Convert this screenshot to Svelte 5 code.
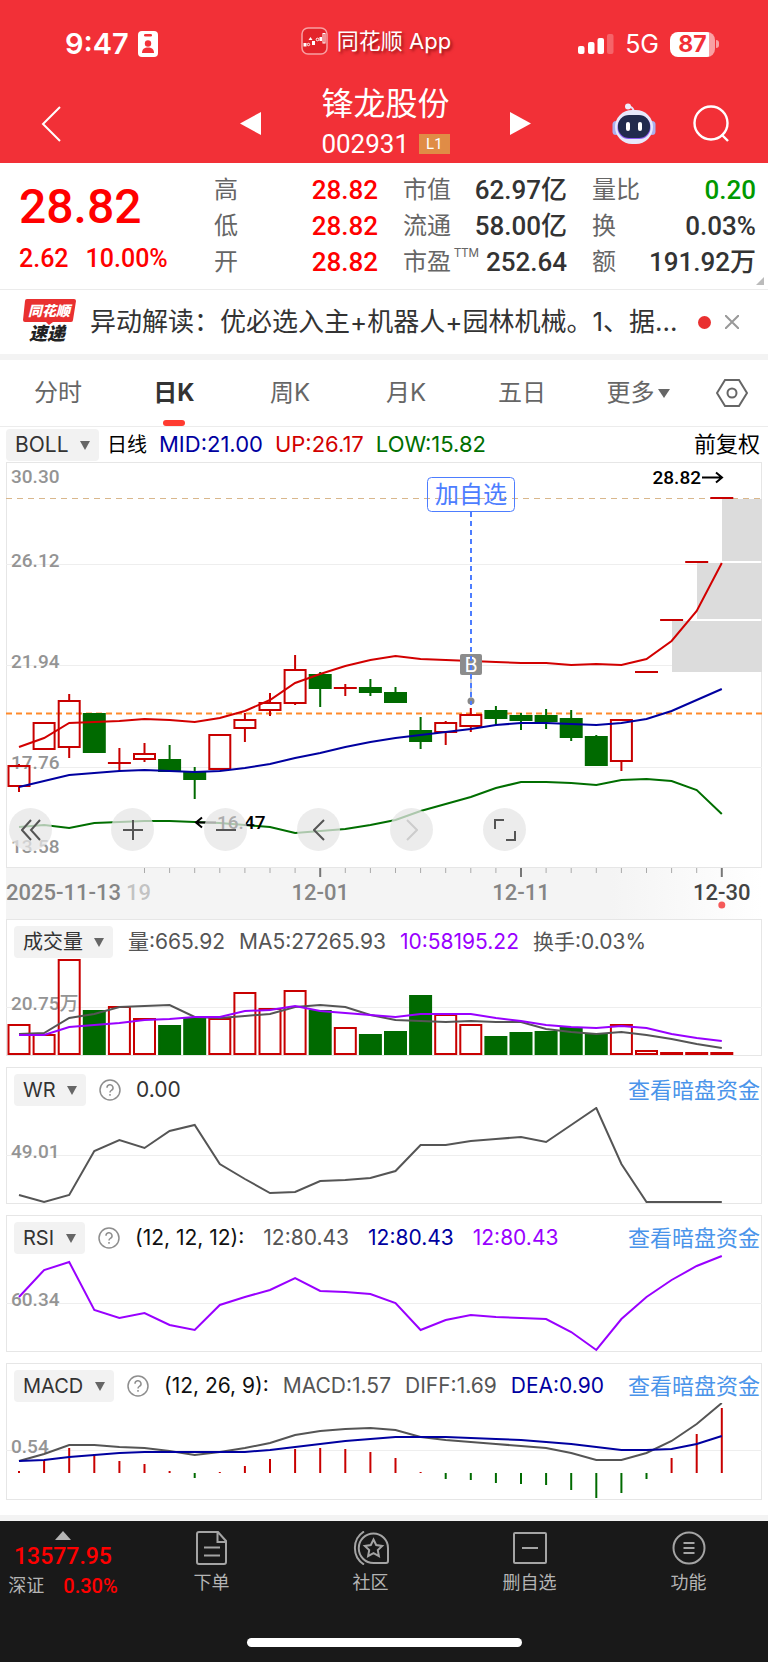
<script lang="ts">
	type Candle = [kind: 'up' | 'down', top: number, bottom: number, high: number, low: number];
	type Value = { text: string; tone: string };

	const STEP = 25.1;
	const FIRST = 13;
	const BAR = 23;

	const x = (i: number) => FIRST + i * STEP;
	const line = (ys: number[]) => ys.map((y, i) => `${x(i).toFixed(1)},${y}`).join(' ');

	const quotes = [
		[
			{ label: '高', value: '28.82', tone: 'rise' },
			{ label: '低', value: '28.82', tone: 'rise' },
			{ label: '开', value: '28.82', tone: 'rise' }
		],
		[
			{ label: '市值', value: '62.97亿', tone: '' },
			{ label: '流通', value: '58.00亿', tone: '' },
			{ label: '市盈', sup: 'TTM', value: '252.64', tone: '' }
		],
		[
			{ label: '量比', value: '0.20', tone: 'fall' },
			{ label: '换', value: '0.03%', tone: '' },
			{ label: '额', value: '191.92万', tone: '' }
		]
	];

	const tabs = ['分时', '日K', '周K', '月K', '五日'];
	let activeTab = $state('日K');

	// Candles, in chart units from the top of the price pane
	const candles: Candle[] = [
		['up', 304, 324, 302, 330],
		['up', 261, 287, 261, 287],
		['up', 239, 285, 232, 296],
		['down', 252, 290, 251, 290],
		['up', 301, 301, 286, 309],
		['up', 292, 297, 281, 300],
		['down', 298, 309, 283, 309],
		['down', 310, 317, 305, 337],
		['up', 273, 307, 273, 307],
		['up', 258, 266, 251, 280],
		['up', 241, 248, 231, 254],
		['up', 208, 241, 193, 243],
		['down', 213, 226, 210, 245],
		['up', 226, 226, 222, 234],
		['down', 226, 230, 217, 234],
		['down', 231, 240, 225, 241],
		['down', 269, 279, 255, 287],
		['up', 261, 270, 259, 283],
		['up', 253, 264, 246, 270],
		['down', 249, 256, 244, 263],
		['down', 254, 258, 251, 268],
		['down', 254, 259, 247, 267],
		['down', 257, 275, 248, 279],
		['down', 275, 303, 273, 304],
		['up', 258, 299, 258, 309],
		['up', 210, 210, 210, 210],
		['up', 158, 158, 158, 158],
		['up', 100, 100, 100, 100],
		['up', 36, 36, 36, 36]
	];

	const upper = [285, 276, 261, 260, 259, 257, 258, 260, 256, 249, 238, 221, 212, 204, 198, 194, 197, 198, 199, 200, 201, 201, 203, 202, 203, 197, 179, 149, 101];
	const middle = [325, 319, 313, 311, 309, 308, 309, 310, 309, 306, 302, 296, 291, 285, 280, 276, 273, 270, 267, 263, 261, 261, 262, 263, 261, 257, 249, 238, 227];
	const lower = [365, 363, 366, 361, 360, 359, 359, 360, 361, 363, 365, 371, 369, 367, 363, 358, 349, 342, 335, 326, 320, 320, 321, 323, 318, 317, 319, 328, 352];

	const priceLabels = [
		{ text: '30.30', y: 21 },
		{ text: '26.12', y: 105 },
		{ text: '21.94', y: 206 },
		{ text: '17.76', y: 307 },
		{ text: '13.58', y: 391 }
	];

	// Price gaps left open by the limit-up days
	const gaps = [
		{ x: 716, y: 37, h: 62 },
		{ x: 691, y: 101, h: 56 },
		{ x: 666, y: 159, h: 51 }
	];

	const ticks = Array.from({ length: 24 }, (_, i) => i + 5);
	const majorTicks = [12, 20, 28];

	const volumeTops = [106, 116, 41, 92, 88, 100, 107, 99, 100, 74, 90, 72, 92, 109, 116, 113, 77, 96, 106, 118, 114, 113, 109, 115, 106, 132, 134, 134, 134];
	const volumeFalls = [3, 6, 7, 12, 14, 15, 16, 19, 20, 21, 22, 23];
	const volumeMa5 = [115, 114, 99, 95, 88, 87, 86, 98, 99, 97, 95, 88, 86, 88, 96, 101, 102, 103, 102, 103, 103, 110, 113, 115, 113, 116, 120, 125, 129];
	const volumeMa10 = [116, 116, 108, 106, 104, 101, 100, 98, 98, 92, 91, 87, 92, 94, 96, 98, 95, 95, 95, 99, 102, 106, 108, 109, 107, 109, 115, 119, 122];

	const wr = [128, 135, 128, 84, 73, 81, 64, 58, 97, 112, 126, 125, 114, 113, 111, 104, 78, 78, 74, 72, 70, 75, 58, 41, 97, 135, 135, 135, 135];
	const rsi = [82, 55, 47, 95, 103, 98, 110, 115, 90, 82, 75, 63, 76, 77, 79, 88, 115, 105, 100, 102, 103, 104, 117, 135, 104, 82, 65, 51, 41];

	const macdZero = 110;
	const macdBars = [108, 97, 85, 91, 98, 101, 108, 115, 109, 103, 96, 86, 85, 86, 89, 95, 109, 116, 117, 120, 121, 122, 127, 135, 130, 116, 95, 71, 45];
	const diff = [98, 91, 82, 82, 84, 85, 88, 92, 89, 85, 80, 72, 68, 66, 65, 67, 74, 77, 79, 81, 83, 85, 90, 97, 97, 90, 78, 61, 40];
	const dea = [98, 97, 94, 92, 90, 89, 89, 89, 89, 89, 87, 84, 81, 78, 76, 74, 74, 74, 75, 76, 77, 79, 81, 84, 87, 87, 86, 81, 73];

	const volumeValues: Value[] = [
		{ text: '量:665.92', tone: 'gray' },
		{ text: 'MA5:27265.93', tone: 'gray' },
		{ text: '10:58195.22', tone: 'purple' },
		{ text: '换手:0.03%', tone: 'gray' }
	];
	const wrValues: Value[] = [{ text: '0.00', tone: 'dark' }];
	const rsiValues: Value[] = [
		{ text: '(12, 12, 12):', tone: 'black' },
		{ text: '12:80.43', tone: 'gray' },
		{ text: '12:80.43', tone: 'blue' },
		{ text: '12:80.43', tone: 'purple' }
	];
	const macdValues: Value[] = [
		{ text: '(12, 26, 9):', tone: 'black' },
		{ text: 'MACD:1.57', tone: 'gray' },
		{ text: 'DIFF:1.69', tone: 'gray' },
		{ text: 'DEA:0.90', tone: 'blue' }
	];
</script>

{#snippet picker(name: string, label: string)}
	<span class="picker">
		<select aria-label={label}>
			<option>{name}</option>
		</select>
		<svg width="10" height="9" viewBox="0 0 10 9"><path d="M0 0h10L5 9z" fill="#666" /></svg>
	</span>
{/snippet}

{#snippet head(name: string, values: Value[], help: boolean, wide: boolean)}
	<div class="pane-head">
		{@render picker(name, '指标')}
		{#if help}
			<button class="help" aria-label="指标说明">
				<svg width="22" height="22" viewBox="0 0 22 22" fill="none" stroke="#8e8e8e" stroke-width="1.5">
					<circle cx="11" cy="11" r="10" />
					<path d="M8 8.8a3 3 0 1 1 4.4 2.6c-1 .5-1.4 1-1.4 2.1" />
					<path d="M11 15v1.8" />
				</svg>
			</button>
		{/if}
		<div class="values" class:wide>
			{#each values as v}
				<span class={v.tone}>{v.text}</span>
			{/each}
		</div>
		{#if help}
			<a class="dark-pool" href="#funds">查看暗盘资金</a>
		{/if}
	</div>
{/snippet}

<header class="top">
	<div class="status">
		<div class="clock">
			9:47
			<svg width="20" height="26" viewBox="0 0 20 26">
				<rect width="20" height="26" rx="4" fill="#fff" />
				<rect x="6" y="3" width="8" height="2.4" rx="1.2" fill="#f23037" />
				<circle cx="10" cy="12.5" r="3.2" fill="#f23037" />
				<path d="M4 22c0-4 2.4-5.6 6-5.6s6 1.6 6 5.6z" fill="#f23037" />
			</svg>
		</div>
		<div class="app-name">
			<svg width="27" height="28" viewBox="0 0 27 28">
				<rect x="1" y="1" width="25" height="26" rx="6" fill="#e3242b" stroke="#f8a0a3" stroke-width="1.5" />
				<g fill="#fff">
					<rect x="2.5" y="16" width="3" height="3.5" />
					<path d="M9.5 10l2 3h-4z" />
					<rect x="11" y="14" width="3" height="4" />
					<rect x="18.5" y="10" width="2.5" height="4" />
				</g>
				<g fill="none" stroke="#fff">
					<circle cx="7.5" cy="17.5" r="1.2" />
					<circle cx="16.5" cy="12.5" r="1.3" />
					<rect x="22" y="6.5" width="2" height="9.5" />
				</g>
			</svg>
			<span>同花顺 App</span>
		</div>
		<div class="signal">
			<svg width="36" height="20" viewBox="0 0 36 20" fill="#fff">
				<rect y="12" width="6.5" height="8" rx="2" />
				<rect x="10" y="8" width="6.5" height="12" rx="2" />
				<rect x="19.5" y="4" width="6.5" height="16" rx="2" />
				<rect x="29" width="6.5" height="20" rx="2" opacity=".25" />
			</svg>
			<span>5G</span>
			<span class="battery">87</span>
		</div>
	</div>
	<nav class="nav">
		<button class="back" aria-label="返回">
			<svg width="20" height="36" viewBox="0 0 20 36" fill="none" stroke="#fff" stroke-width="2"><path d="M19 1L2 18l17 17" /></svg>
		</button>
		<div class="stock">
			<button aria-label="上一只"><svg width="21" height="23" viewBox="0 0 21 23"><path d="M21 0v23L0 11.5z" fill="#fff" /></svg></button>
			<div class="stock-name">
				<h1>锋龙股份</h1>
				<p>002931 <span class="level">L1</span></p>
			</div>
			<button aria-label="下一只"><svg width="21" height="23" viewBox="0 0 21 23"><path d="M0 0v23l21-11.5z" fill="#fff" /></svg></button>
		</div>
		<div class="tools">
			<button aria-label="智能助手">
				<svg width="44" height="42" viewBox="0 0 44 42">
					<path d="M15 4c4-1 7 1 7 6" fill="none" stroke="#e4e4fb" stroke-width="2" />
					<circle cx="16" cy="3.5" r="3" fill="#eeeefc" />
					<rect x="0.5" y="18" width="7" height="14" rx="3.5" fill="#aab0ee" />
					<rect x="36.5" y="18" width="7" height="14" rx="3.5" fill="#aab0ee" />
					<rect x="3" y="7" width="38" height="34" rx="17" fill="#e8e9fb" />
					<rect x="5.5" y="13" width="33" height="23" rx="11" fill="#8b5cf0" />
					<rect x="6" y="12" width="32" height="23" rx="11" fill="#222b4d" />
					<rect x="14" y="19" width="4" height="9" rx="2" fill="#fff" />
					<rect x="26" y="19" width="4" height="9" rx="2" fill="#fff" />
				</svg>
			</button>
			<button aria-label="搜索">
				<svg width="37" height="37" viewBox="0 0 37 37" fill="none" stroke="#fff" stroke-width="2.4"><circle cx="18" cy="18" r="16.5" /><path d="M28.5 29.5L35 36" /></svg>
			</button>
		</div>
	</nav>
</header>

<main>
	<section class="quote">
		<div class="last">
			<strong>28.82</strong>
			<div class="change"><span>2.62</span><span>10.00%</span></div>
		</div>
		{#each quotes as column}
			<dl>
				{#each column as q}
					<div>
						<dt>{q.label}{#if q.sup}<sup>{q.sup}</sup>{/if}</dt>
						<dd class={q.tone}>{q.value}</dd>
					</div>
				{/each}
			</dl>
		{/each}
		<svg class="corner" width="8" height="8" viewBox="0 0 8 8"><path d="M8 0v8H0z" fill="#bbb" /></svg>
	</section>

	<section class="news">
		<svg class="express" width="54" height="52" viewBox="0 -3 54 52">
			<path d="M4 0h47q2 0 2 2l-3 19q0 2-2 2H30l-4 3-3-3H2q-2 0-2-2L2 2q0-2 2-2z" fill="#e93030" />
			<text x="26" y="17" fill="#fff" font-size="14">同花顺</text>
			<text x="24" y="41" fill="#222" font-size="18">速递</text>
		</svg>
		<a href="#news">异动解读：优必选入主+机器人+园林机械。1、据...</a>
		<span class="dot"></span>
		<button aria-label="关闭">
			<svg width="14" height="14" viewBox="0 0 14 14" stroke="#999" stroke-width="2"><path d="M0 0l14 14M14 0L0 14" /></svg>
		</button>
	</section>

	<div class="tabs">
		{#each tabs as tab}
			<button class="tab" class:active={activeTab === tab} onclick={() => (activeTab = tab)}>{tab}</button>
		{/each}
		<button class="tab" aria-haspopup="true">
			更多<svg width="12" height="9" viewBox="0 0 12 9"><path d="M0 0h12L6 9z" fill="#666" /></svg>
		</button>
		<button class="settings" aria-label="设置">
			<svg width="32" height="28" viewBox="0 0 32 28" fill="none" stroke="#666" stroke-width="2"><path d="M9 1h14l8 13-8 13H9L1 14z" /><circle cx="16" cy="14" r="4.5" /></svg>
		</button>
	</div>

	<div class="boll">
		{@render picker('BOLL', '主图指标')}
		<span class="period">日线</span>
		<span class="blue">MID:21.00</span>
		<span class="red">UP:26.17</span>
		<span class="green">LOW:15.82</span>
		<span class="adjust">前复权</span>
	</div>

	<section class="pane price">
		<svg class="chart" viewBox="0 0 756 406">
			{#each [102.5, 203.5, 305.5] as y}
				<path class="grid" d="M0 {y}H756" />
			{/each}
			{#each gaps as g}
				<rect x={g.x} y={g.y} width={756 - g.x} height={g.h} fill="#dcdcdc" />
			{/each}
			{#each priceLabels as p}
				<text class="axis" x="5" y={p.y}>{p.text}</text>
			{/each}
			<path d="M0 36.5H756" stroke="#d9b78c" stroke-dasharray="6 5" />
			<path d="M0 251.5H756" stroke="#ff8a2b" stroke-width="2" stroke-dasharray="6 4" />
			{#each candles as [kind, top, bottom, high, low], i}
				<g class={kind}>
					<path d="M{x(i)} {high}V{top}M{x(i)} {bottom}V{low}" />
					<rect x={x(i) - BAR / 2 + 1} y={top} width={BAR - 2} height={bottom - top} />
					{#if top === bottom}
						<path d="M{x(i) - BAR / 2} {top}h{BAR}" />
					{/if}
				</g>
			{/each}
			<polyline class="curve up-line" points={line(upper)} />
			<polyline class="curve mid-line" points={line(middle)} />
			<polyline class="curve low-line" points={line(lower)} />

			<rect x="421.5" y="15.5" width="87" height="34" rx="4" fill="none" stroke="#4d7dff" />
			<text class="note" x="465" y="41">加自选</text>
			<rect x="454" y="192" width="22" height="21" rx="2" fill="#8c8c8c" />
			<text class="mark" x="465" y="210">B</text>
			<circle cx="465" cy="239" r="3.5" fill="#888" />
			<path d="M465 213v24" stroke="#999" />
			<path d="M465 50V243" stroke="#4d7dff" stroke-width="2" stroke-dasharray="5 4" />

			<text class="peak" x="695" y="22" text-anchor="end">28.82</text>
			<path d="M696 15.5h20m-6-5l6 5-6 5" class="arrow" />
			<text class="peak" x="211" y="367">16.47</text>
			<path d="M210 360.5h-20m6-5l-6 5 6 5" class="arrow" />
		</svg>
		<div class="controls">
			<button aria-label="最早"><svg width="20" height="22" viewBox="0 0 20 22"><path d="M10 1L1 11l9 10M19 1l-9 10 9 10" /></svg></button>
			<button aria-label="放大"><svg width="20" height="20" viewBox="0 0 20 20"><path d="M10 0v20M0 10h20" /></svg></button>
			<button aria-label="缩小"><svg width="20" height="20" viewBox="0 0 20 20"><path d="M0 10h20" /></svg></button>
			<button aria-label="左移"><svg width="12" height="22" viewBox="0 0 12 22"><path d="M11 1L1 11l10 10" /></svg></button>
			<button aria-label="右移" disabled><svg width="12" height="22" viewBox="0 0 12 22"><path d="M1 1l10 10L1 21" /></svg></button>
			<button aria-label="全屏"><svg width="22" height="22" viewBox="0 0 22 22"><path d="M1 10V1h9M21 12v9h-9" /></svg></button>
		</div>
	</section>

	<section class="dates">
		<svg class="chart" viewBox="0 0 756 51">
			{#each ticks as i}
				{@const major = majorTicks.includes(i)}
				<path d="M{x(i)} 0v{major ? 9 : 5}" stroke={major ? '#777' : '#aaa'} stroke-width={major ? 2 : 1} />
			{/each}
			<text x="0" y="32">2025-11-13</text>
			<text x="120" y="32" fill-opacity=".45">19</text>
			<text x={x(12)} y="32" text-anchor="middle">12-01</text>
			<text x={x(20)} y="32" text-anchor="middle">12-11</text>
			<text x={x(28)} y="32" text-anchor="middle" class="today">12-30</text>
			<circle cx={x(28)} cy="37" r="3.5" fill="#f55a5a" />
		</svg>
	</section>

	<section class="pane">
		{@render head('成交量', volumeValues, false, false)}
		<svg class="chart" viewBox="0 40 756 97">
			<path class="grid" d="M0 88.5H756" />
			<text class="axis" x="5" y="91">20.75万</text>
			{#each volumeTops as top, i}
				<g class={volumeFalls.includes(i) ? 'down' : 'up'}>
					<rect x={x(i) - BAR / 2 + 1} y={top} width={BAR - 2} height={135 - top} />
				</g>
			{/each}
			<polyline class="curve gray-line" points={line(volumeMa5)} />
			<polyline class="curve purple-line" points={line(volumeMa10)} />
		</svg>
	</section>

	<section class="pane">
		{@render head('WR', wrValues, true, false)}
		<svg class="chart" viewBox="0 40 756 97">
			<path class="grid" d="M0 88.5H756" />
			<text class="axis" x="5" y="91">49.01</text>
			<polyline class="curve gray-line" points={line(wr)} />
		</svg>
	</section>

	<section class="pane">
		{@render head('RSI', rsiValues, true, true)}
		<svg class="chart" viewBox="0 40 756 97">
			<path class="grid" d="M0 88.5H756" />
			<text class="axis" x="5" y="91">60.34</text>
			<polyline class="curve purple-line" points={line(rsi)} />
		</svg>
	</section>

	<section class="pane">
		{@render head('MACD', macdValues, true, false)}
		<svg class="chart" viewBox="0 40 756 97">
			<path class="grid" d="M0 87.5H756" />
			<text class="axis" x="5" y="90">0.54</text>
			{#each macdBars as y, i}
				<path d="M{x(i)} {macdZero}V{y}" stroke={y < macdZero ? '#c80000' : '#006a00'} stroke-width="2" />
			{/each}
			<polyline class="curve gray-line" points={line(diff)} />
			<polyline class="curve mid-line" points={line(dea)} />
		</svg>
	</section>
</main>

<footer>
	<div class="bar">
		<button class="index">
			<svg width="16" height="9" viewBox="0 0 16 9"><path d="M8 0l8 9H0z" fill="#b4b4b4" /></svg>
			<strong>13577.95</strong>
			<span class="index-row"><span>深证</span><b>0.30%</b></span>
		</button>
		<button class="action">
			<svg width="32" height="34" viewBox="0 0 32 34"><path d="M3 1h19l8 9v21q0 2-2 2H3q-2 0-2-2V3q0-2 2-2zM21.5 1.5V11H30M8 16.5h16M8 24.5h16" /></svg>
			下单
		</button>
		<button class="action">
			<svg width="36" height="34" viewBox="0 0 36 34">
				<path d="M20.5 2.5A14.5 14.5 0 1 0 20.5 32H33q2 0 2-2V17A14.5 14.5 0 0 0 20.5 2.5zM11 .5a19.5 19.5 0 0 0 0 33" />
				<path d="M20.5 8.5l2.7 5.5 6 .9-4.4 4.2 1.1 6-5.4-2.9-5.4 2.9 1.1-6-4.4-4.2 6-.9z" />
			</svg>
			社区
		</button>
		<button class="action">
			<svg width="34" height="34" viewBox="0 0 34 34"><rect x="1" y="2" width="32" height="30" rx="1" /><path d="M9 17h16" /></svg>
			删自选
		</button>
		<button class="action">
			<svg width="34" height="34" viewBox="0 0 34 34"><circle cx="17" cy="17" r="15.5" /><path d="M11.5 12h11M11.5 17h11M11.5 22h11" /></svg>
			功能
		</button>
	</div>
	<div class="home"></div>
</footer>

<style>
	:global(body) {
		margin: 0;
		background: #fff;
		font-family: Inter, 'Noto Sans CJK SC', sans-serif;
		line-height: 1.2;
	}
	button {
		display: flex;
		align-items: center;
		justify-content: center;
		padding: 0;
		border: 0;
		background: none;
		color: inherit;
		font: inherit;
		cursor: pointer;
	}
	svg {
		display: block;
		flex: none;
	}
	a {
		text-decoration: none;
	}

	.top {
		background: #f23037;
		color: #fff;
	}
	.status {
		display: grid;
		grid-template-columns: 1fr auto 1fr;
		align-items: center;
		height: 64px;
		padding: 12px 53px 0 37px;
	}
	.clock {
		display: flex;
		align-items: center;
		gap: 9px;
		padding-left: 28px;
		font-size: 29px;
		font-weight: 600;
		line-height: 64px;
	}
	.app-name {
		display: flex;
		align-items: center;
		gap: 9px;
		font-size: 22px;
		line-height: 56px;
		padding-bottom: 6px;
		text-shadow: 2px 2px 3px rgba(90, 0, 0, 0.6);
	}
	.signal {
		display: flex;
		align-items: center;
		justify-content: flex-end;
		gap: 11px;
		font-size: 25px;
	}
	.battery {
		position: relative;
		width: 45px;
		border-radius: 8px;
		background: linear-gradient(90deg, #fff 86%, #f9a0a3 86%);
		color: #f23037;
		font-size: 23px;
		font-weight: 700;
		line-height: 25px;
		text-align: center;
	}
	.battery::after {
		content: '';
		position: absolute;
		top: 8px;
		right: -4px;
		width: 3px;
		height: 8px;
		border-radius: 0 3px 3px 0;
		background: #f9a0a3;
	}
	.nav {
		display: grid;
		grid-template-columns: 1fr auto 1fr;
		align-items: center;
		height: 87px;
		padding: 0 38px 0 41px;
	}
	.back {
		justify-self: start;
		padding-top: 8px;
	}
	.stock {
		display: flex;
		align-items: center;
		justify-content: space-between;
		width: 292px;
	}
	.stock > button {
		padding-top: 8px;
	}
	.stock-name {
		padding-top: 7px;
	}
	.stock-name h1 {
		margin: 0;
		font-size: 32px;
		font-weight: 400;
		line-height: 42px;
	}
	.stock-name p {
		display: flex;
		align-items: center;
		justify-content: center;
		gap: 10px;
		margin: 0;
		font-family: Roboto, sans-serif;
		font-size: 26px;
		line-height: 38px;
	}
	.level {
		padding: 0 7px;
		background: #e08c46;
		font-size: 15px;
		line-height: 20px;
	}
	.tools {
		display: flex;
		justify-content: flex-end;
		gap: 37px;
		padding-top: 8px;
	}

	.quote {
		position: relative;
		display: grid;
		grid-template-columns: 170fr 164fr 164fr 164fr;
		gap: 25px;
		padding: 9px 12px 9px 19px;
		border-bottom: 1px solid #ebebeb;
		color: #333;
		font-family: Roboto, 'Noto Sans CJK SC', sans-serif;
	}
	.last {
		color: #f00;
		font-weight: 500;
	}
	.last strong {
		display: block;
		font-size: 48px;
		font-weight: 500;
		line-height: 70px;
	}
	.change {
		display: flex;
		gap: 17px;
		font-size: 25px;
		line-height: 34px;
	}
	dl {
		margin: 0;
	}
	dl div {
		display: flex;
		justify-content: space-between;
		height: 36px;
		line-height: 36px;
		white-space: nowrap;
	}
	dt {
		display: flex;
		color: #666;
		font-size: 24px;
	}
	sup {
		margin-left: 3px;
		font-size: 12px;
		line-height: 18px;
	}
	dd {
		margin: 0;
		font-size: 26px;
		font-weight: 500;
	}
	.rise {
		color: #f00;
	}
	.fall {
		color: #090;
	}
	.corner {
		position: absolute;
		right: 4px;
		bottom: 4px;
	}

	.news {
		display: flex;
		align-items: center;
		height: 64px;
		padding: 0 29px 0 23px;
		border-bottom: 6px solid #f3f3f3;
	}
	.express {
		overflow: visible;
	}
	.express text {
		font-family: 'Noto Sans CJK SC', sans-serif;
		font-style: italic;
		font-weight: 900;
		text-anchor: middle;
	}
	.news a {
		flex: 1;
		min-width: 0;
		margin-left: 13px;
		overflow: hidden;
		color: #333;
		font-size: 26px;
		line-height: 40px;
		text-overflow: ellipsis;
		white-space: nowrap;
	}
	.dot {
		width: 13px;
		height: 13px;
		margin: 0 14px 0 12px;
		border-radius: 50%;
		background: #e93030;
	}

	.tabs {
		display: flex;
		height: 66px;
		border-bottom: 1px solid #ececec;
	}
	.tab {
		position: relative;
		flex: 1;
		gap: 3px;
		color: #666;
		font-size: 24px;
	}
	.tab.active {
		color: #333;
		font-weight: 700;
	}
	.tab.active::after {
		content: '';
		position: absolute;
		bottom: 0;
		left: 50%;
		width: 22px;
		height: 6px;
		margin-left: -11px;
		border-radius: 3px;
		background: #ff3b30;
	}
	.settings {
		width: 72px;
	}

	.picker {
		position: relative;
		display: flex;
	}
	.picker select {
		height: 32px;
		margin: 0;
		padding: 0 30px 0 9px;
		border: 0;
		border-radius: 4px;
		background: #f2f2f2;
		appearance: none;
		color: #333;
		font: inherit;
		font-size: 20px;
	}
	.picker svg {
		position: absolute;
		top: 12px;
		right: 9px;
		pointer-events: none;
	}
	.boll {
		display: flex;
		align-items: center;
		gap: 12px;
		height: 35px;
		padding: 0 8px 0 6px;
		font-size: 22px;
		white-space: nowrap;
	}
	.boll .picker {
		margin-right: -4px;
	}
	.boll .picker select {
		font-size: 21px;
	}
	.period {
		font-size: 20px;
	}
	.adjust {
		margin-left: auto;
	}
	.black {
		color: #111;
	}
	.dark {
		color: #333;
	}
	.gray {
		color: #555;
	}
	.blue {
		color: #0000a0;
	}
	.red {
		color: #d20000;
	}
	.green {
		color: #006e00;
	}
	.purple {
		color: #90f;
	}

	.pane {
		position: relative;
		margin: 0 6px 11px;
		box-shadow: inset 0 0 0 1px #e6e6e6;
	}
	.price {
		margin-bottom: 0;
	}
	.pane-head {
		display: flex;
		align-items: center;
		height: 32px;
		padding: 7px 2px 1px 8px;
		font-size: 21px;
		white-space: nowrap;
	}
	.help {
		margin-left: 13px;
	}
	.values {
		display: flex;
		gap: 14px;
		margin-left: 15px;
	}
	.values.wide {
		gap: 19px;
	}
	.dark-pool {
		margin-left: auto;
		color: #4a94ea;
		font-size: 22px;
	}

	.chart {
		width: 100%;
		height: auto;
	}
	.grid {
		stroke: #eee;
	}
	.axis {
		fill: #949494;
		font: 500 19px Roboto, 'Noto Sans CJK SC', sans-serif;
	}
	.up path,
	.up rect {
		fill: none;
		stroke: #c80000;
		stroke-width: 2;
	}
	.down path,
	.down rect {
		fill: #006a00;
		stroke: #006a00;
		stroke-width: 2;
	}
	.curve {
		fill: none;
		stroke-width: 2;
	}
	.up-line {
		stroke: #d20000;
	}
	.mid-line {
		stroke: #0000a0;
	}
	.low-line {
		stroke: #006e00;
	}
	.gray-line {
		stroke: #555;
	}
	.purple-line {
		stroke: #90f;
	}
	.note {
		fill: #4d7dff;
		font-size: 24px;
		text-anchor: middle;
	}
	.mark {
		fill: #fff;
		font-size: 20px;
		text-anchor: middle;
	}
	.peak {
		font: 500 19px Roboto, sans-serif;
	}
	.arrow {
		fill: none;
		stroke: #000;
		stroke-width: 2;
	}
	.controls {
		position: absolute;
		bottom: 17px;
		left: 3px;
		display: flex;
		gap: 50px;
	}
	.controls button {
		width: 43px;
		height: 43px;
		border-radius: 50%;
		background: rgba(230, 230, 230, 0.75);
	}
	.controls button:first-child {
		margin-right: 9px;
	}
	.controls svg {
		fill: none;
		stroke: #555;
		stroke-width: 2;
	}
	.controls button:disabled svg {
		stroke: #ccc;
	}
	.dates {
		margin: 0 6px;
		background: linear-gradient(90deg, #f4f4f4 80%, #fff);
	}
	.dates text {
		fill: #858585;
		font: 500 22px Roboto, sans-serif;
	}
	.dates .today {
		fill: #444;
	}

	footer {
		margin-top: 15px;
		padding-bottom: 15px;
		border-top: 6px solid #f3f3f3;
		background: #191919;
		color: #b4b4b4;
	}
	.bar {
		display: flex;
		align-items: flex-start;
		padding-top: 10px;
	}
	.index {
		flex: none;
		flex-direction: column;
		width: 126px;
		margin-right: 6px;
		font-family: Roboto, 'Noto Sans CJK SC', sans-serif;
	}
	.index strong {
		color: #f00;
		font-size: 23px;
		font-weight: 500;
		line-height: 34px;
	}
	.index-row {
		display: flex;
		gap: 19px;
		font-size: 18px;
		line-height: 24px;
	}
	.index-row b {
		color: #f00;
		font-size: 20px;
		font-weight: 500;
	}
	.action {
		flex: 1;
		flex-direction: column;
		gap: 5px;
		font-size: 18px;
		line-height: 26px;
	}
	.action svg {
		fill: none;
		stroke: #a4a4a4;
		stroke-width: 2;
	}
	.home {
		width: 275px;
		height: 9px;
		margin: 40px auto 0;
		border-radius: 5px;
		background: #fff;
	}
</style>
